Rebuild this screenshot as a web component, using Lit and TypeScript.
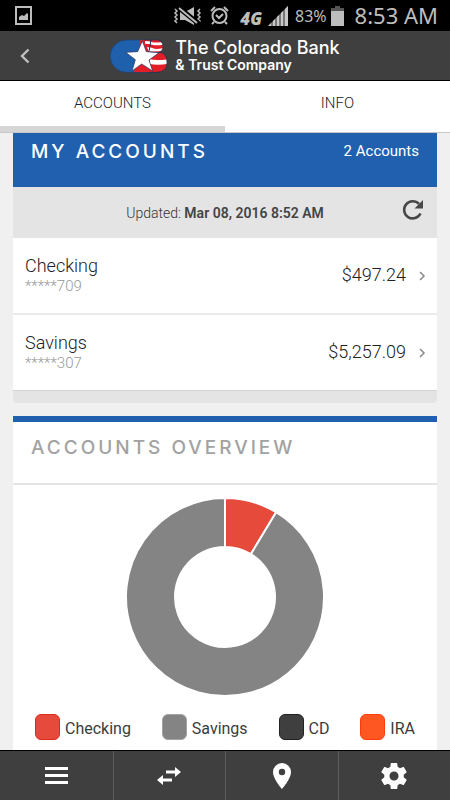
import { LitElement, html, css, svg } from "lit";
import { customElement, property, state } from "lit/decorators.js";
import { classMap } from "lit/directives/class-map.js";
import { styleMap } from "lit/directives/style-map.js";

interface Account {
  name: string;
  masked: string;
  balance: number;
  color: string;
}

const ACCOUNTS: Account[] = [
  { name: "Checking", masked: "*****709", balance: 497.24, color: "#e64a3b" },
  { name: "Savings", masked: "*****307", balance: 5257.09, color: "#848484" },
];

const LEGEND = [
  { name: "Checking", color: "#e64a3b", edge: "#e2281c" },
  { name: "Savings", color: "#848484", edge: "#a3a3a3" },
  { name: "CD", color: "#3f3f3f", edge: "#222222" },
  { name: "IRA", color: "#ff5722", edge: "#ff3c0a" },
];

const money = (n: number) =>
  "$" + n.toLocaleString("en-US", { minimumFractionDigits: 2, maximumFractionDigits: 2 });

@customElement("status-bar")
export class StatusBar extends LitElement {
  static styles = css`
    :host {
      display: flex;
      align-items: center;
      height: 31px;
      padding: 0 12px 0 15px;
      background: #000;
      color: #bdbdbd;
      font-family: "Noto Sans", "Open Sans", sans-serif;
    }
    svg { display: block; flex: none; }
    .spacer { flex: 1; }
    .vibrate { margin-right: 8px; }
    .alarm { margin-right: 11px; }
    .network {
      font: italic 800 17px/20px "Open Sans", sans-serif;
      margin: 6px 6px 0 0;
    }
    .signal { margin: 1px 7px 0 0; }
    .percent { font-size: 16px; line-height: 20px; }
    .battery { margin: 0 11px 0 4px; }
    .time { font-size: 22px; line-height: 30px; margin-top: -1px; white-space: nowrap; }
  `;
  render() {
    return html`
      <svg width="17" height="19" viewBox="0 0 17 19" aria-hidden="true">
        <rect x="1" y="1" width="15" height="17" fill="none" stroke="#bdbdbd" stroke-width="2" />
        <path d="M4 14V11l3-2 2 1 3-3 1 1v6z" fill="#bdbdbd" />
      </svg>
      <span class="spacer"></span>
      <svg class="vibrate" width="29" height="18" viewBox="0 0 29 18" aria-hidden="true">
        <path d="M2 2l2 2-2 2 2 2-2 2 2 2-2 2 2 2M27 2l-2 2 2 2-2 2 2 2-2 2 2 2-2 2" fill="none" stroke="#bdbdbd" stroke-width="1.500" />
        <path d="M7 5h5l9-5v18l-9-5H7z" fill="#bdbdbd" />
        <path d="M5 0l21 17" stroke="#000" stroke-width="5" />
        <path d="M6 1l18 15" stroke="#bdbdbd" stroke-width="2" />
      </svg>
      <svg class="alarm" width="19" height="19" viewBox="0 0 19 19" fill="none" stroke="#bdbdbd" stroke-width="2" aria-hidden="true">
        <circle cx="9.5" cy="10" r="7" />
        <path d="M1 5l4-4M18 5l-4-4M4 16l-2 2M15 16l2 2M6 9l3 3 4-4" />
      </svg>
      <span class="network">4G</span>
      <svg class="signal" width="20" height="20" viewBox="0 0 20 20" aria-hidden="true">
        <path d="M0 20L20 0V20z" fill="#777" />
        <path d="M0 20l3-3v3zM5 15l2-2v7H5zM9 11l2-2v11H9zM13 7l2-2v15h-2zM17 3l3-3v20h-3z" fill="#c8c8c8" />
      </svg>
      <span class="percent">83%</span>
      <svg class="battery" width="13" height="20" viewBox="0 0 13 20" aria-hidden="true">
        <path d="M4 0h5v2h4v3H0V2h4z" fill="#555" />
        <path d="M0 5h13v15H0z" fill="#bdbdbd" />
      </svg>
      <span class="time">8:53 AM</span>
    `;
  }
}

@customElement("bank-header")
export class BankHeader extends LitElement {
  static styles = css`
    :host {
      display: grid;
      grid-template-columns: 50px 1fr 50px;
      align-items: center;
      height: 50px;
      box-sizing: border-box;
      border-bottom: 1px solid #000;
      background: #3f3f3f;
      color: #fff;
    }
    button {
      display: grid;
      place-items: center;
      height: 48px;
      padding: 0;
      border: 0;
      background: none;
    }
    .brand {
      display: flex;
      justify-content: center;
      align-items: center;
      gap: 7px;
      font-family: Inter, sans-serif;
      white-space: nowrap;
    }
    .name {
      font-size: 18px;
      font-weight: 500;
      line-height: 18px;
    }
    .sub {
      font-size: 14px;
      font-weight: 600;
      line-height: 16px;
    }
  `;
  render() {
    return html`
      <button aria-label="Back">
        <svg width="10" height="16" viewBox="0 0 10 16" fill="none" stroke="#c0c0c0" stroke-width="2.4">
          <path d="M8.500 1.500L2 8l6.500 6.500" />
        </svg>
      </button>
      <div class="brand">
        <svg width="58" height="34" viewBox="329 116 174 102" aria-hidden="true">
          <defs>
            <clipPath id="lobes">
              <path d="M420 119H466a20 20 0 0 1 14 36q20 8 20 31 0 29-30 30H400z" />
            </clipPath>
          </defs>
          <path d="M378 119H430L450 216H378a48 48 0 0 1 0-97z" fill="#1f60ad" stroke="#24406f" stroke-width="2" />
          <g clip-path="url(#lobes)">
            <path d="M420 116h90v104H400z" fill="#e41e26" />
            <path d="M434 122q12 0 20 3t34 0v8q-20 3-32 0t-22-3zM440 141q10-1 18 3t28 0v8l-40 2zM448 177q18 4 54 0v14q-30 5-54 0z" fill="#fff" />
            <path d="M452 119l-6 34M446 155q22 5 40 0" fill="none" stroke="#1b2f5f" stroke-width="3" />
          </g>
          <path d="M430 119H466a20 20 0 0 1 14 36q20 8 20 31 0 29-30 30H446" fill="none" stroke="#1b2f5f" stroke-width="2" />
          <path d="M426 122l12 32 38 3-30 22 11 33-33-21-29 21 10-34-29-22 36-2z" fill="#fff" stroke="#1b2f5f" stroke-width="2" />
        </svg>
        <div>
          <div class="name">The Colorado Bank</div>
          <div class="sub">&amp; Trust Company</div>
        </div>
      </div>
    `;
  }
}

@customElement("tab-strip")
export class TabStrip extends LitElement {
  @state() private active = 0;
  static styles = css`
    :host {
      display: grid;
      grid-template-columns: 1fr 1fr;
      background: #fff;
      border-bottom: 1px solid #c8c8c8;
    }
    .tab {
      padding: 0;
      border: 0;
      border-bottom: 6px solid #fff;
      background: #fff;
      color: #222;
      font: 300 15px/45px Roboto, sans-serif;
    }
    .active { border-bottom-color: #d6d6d6; }
  `;
  render() {
    return ["ACCOUNTS", "INFO"].map(
      (label, i) => html`<button
        class=${classMap({ tab: true, active: i === this.active })}
        @click=${() => (this.active = i)}
      >${label}</button>`
    );
  }
}

@customElement("accounts-card")
export class AccountsCard extends LitElement {
  static styles = css`
    :host { display: block; font-family: Roboto, sans-serif; color: #222; }
    .head {
      display: flex;
      justify-content: space-between;
      height: 54px;
      padding: 0 18px;
      box-sizing: border-box;
      background: #2160ae;
      color: #fff;
      line-height: 36px;
    }
    h2 {
      margin: 0;
      font: 500 19px/38px Inter, sans-serif;
      letter-spacing: 3px;
    }
    .count { font-size: 15px; }
    .updated {
      display: grid;
      grid-template-columns: 50px 1fr 50px;
      align-items: center;
      height: 51px;
      background: #e4e4e4;
      text-align: center;
      font-size: 14px;
      font-weight: 300;
      color: #333;
    }
    .updated strong { font-weight: 600; color: #444; }
    .refresh {
      grid-column: 3;
      display: grid;
      place-items: center;
      height: 51px;
      padding: 0 0 6px;
      border: 0;
      background: none;
    }
    .date { grid-column: 2; }
    ul { margin: 0; padding: 0; list-style: none; background: #fff; }
    .row {
      display: flex;
      align-items: center;
      height: 75px;
      box-sizing: border-box;
      padding: 0 11px 2px 12px;
      color: inherit;
      text-decoration: none;
      font-size: 18px;
      font-weight: 300;
    }
    li + li { border-top: 2px solid #ebebeb; }
    .label { flex: 1; padding-top: 2px; line-height: 22px; }
    .mask { display: block; font-size: 15px; line-height: 19px; color: #999; }
    .chevron { margin: 2px 0 0 13px; }
    .foot {
      height: 13px;
      border-top: 1px solid #d4d4d4;
      border-radius: 0 0 4px 4px;
      background: #e4e4e4;
      box-sizing: border-box;
    }
  `;
  render() {
    return html`
      <div class="head">
        <h2>MY ACCOUNTS</h2>
        <span class="count">${ACCOUNTS.length} Accounts</span>
      </div>
      <div class="updated">
        <span class="date">Updated: <strong>Mar 08, 2016 8:52 AM</strong></span>
        <button class="refresh" aria-label="Refresh">
          <svg width="22" height="22" viewBox="0 0 22 22">
            <path d="M19.500 14.500A8.600 8.600 0 1 1 18 4.900" fill="none" stroke="#484848" stroke-width="2.600" />
            <path d="M22 1v8.500h-8.500z" fill="#484848" />
          </svg>
        </button>
      </div>
      <ul>
        ${ACCOUNTS.map(
          (a) => html`<li>
            <a class="row" href="#">
              <span class="label">${a.name}<span class="mask">${a.masked}</span></span>
              <span>${money(a.balance)}</span>
              <svg class="chevron" width="7" height="10" viewBox="0 0 7 10" fill="none" stroke="#888" stroke-width="1.500">
                <path d="M1 1l4 4-4 4" />
              </svg>
            </a>
          </li>`
        )}
      </ul>
      <div class="foot"></div>
    `;
  }
}

@customElement("donut-chart")
export class DonutChart extends LitElement {
  @property({ attribute: false }) slices: Account[] = [];
  static styles = css`
    :host { display: block; }
    svg { display: block; margin: 0 auto; }
  `;
  render() {
    const total = this.slices.reduce((sum, s) => sum + s.balance, 0);
    const outer = 99;
    const inner = 50;
    let turn = 0;
    const at = (r: number, t: number) =>
      `${(100 + r * Math.sin(t * 2 * Math.PI)).toFixed(2)} ${(100 - r * Math.cos(t * 2 * Math.PI)).toFixed(2)}`;
    return html`
      <svg width="200" height="200" viewBox="0 0 200 200" role="img" aria-label="Balance by account">
        ${this.slices.map((s) => {
          const from = turn;
          turn += s.balance / total;
          const big = turn - from > 0.5 ? 1 : 0;
          return svg`<path
            d="M${at(outer, from)}A${outer} ${outer} 0 ${big} 1 ${at(outer, turn)}L${at(inner, turn)}A${inner} ${inner} 0 ${big} 0 ${at(inner, from)}Z"
            fill=${s.color} stroke="#fff" stroke-width="2" />`;
        })}
      </svg>
    `;
  }
}

@customElement("overview-card")
export class OverviewCard extends LitElement {
  static styles = css`
    :host {
      display: block;
      border-top: 6px solid #2160ae;
      background: #fff;
      font-family: Roboto, sans-serif;
    }
    h2 {
      margin: 0;
      padding: 7px 18px 16px;
      border-bottom: 2px solid #e4e4e4;
      font: 500 19px/38px Inter, sans-serif;
      letter-spacing: 3px;
      color: #a2a2a2;
    }
    donut-chart { padding: 12px 0 17px; }
    .legend {
      display: flex;
      justify-content: space-between;
      margin: 0;
      padding: 0 22px 9px;
      list-style: none;
      color: #3c3c3c;
      font-size: 16px;
      font-weight: 400;
      line-height: 26px;
    }
    .legend li { display: flex; gap: 5px; }
    .text { padding-top: 2px; }
    .swatch {
      width: 25px;
      height: 26px;
      box-sizing: border-box;
      border: 1px solid;
      border-radius: 6px;
    }
  `;
  render() {
    return html`
      <h2>ACCOUNTS OVERVIEW</h2>
      <donut-chart .slices=${ACCOUNTS}></donut-chart>
      <ul class="legend">
        ${LEGEND.map(
          (l) => html`<li>
            <span class="swatch" style=${styleMap({ background: l.color, borderColor: l.edge })}></span>
            <span class="text">${l.name}</span>
          </li>`
        )}
      </ul>
    `;
  }
}

@customElement("bottom-nav")
export class BottomNav extends LitElement {
  static styles = css`
    :host {
      display: grid;
      grid-template-columns: repeat(4, 1fr);
      height: 49px;
      border-top: 1px solid #000;
      background: #3f3f3f;
    }
    button {
      display: grid;
      place-items: center;
      padding: 0;
      border: 0;
      background: none;
    }
    button + button { border-left: 1px solid #5c5c5c; }
    svg { display: block; fill: #fff; }
  `;
  render() {
    return html`
      <button aria-label="Menu">
        <svg width="24" height="17" viewBox="0 0 24 17">
          <path d="M1 0h23v3H1zM1 7h23v3H1zM1 14h23v3H1z" />
        </svg>
      </button>
      <button aria-label="Transfer">
        <svg width="24" height="18" viewBox="0 0 24 18">
          <path d="M9 3.500h9V0l6 5-6 5V6.500H9zM15 11.500H6V8l-6 5 6 5v-3.500h9z" />
        </svg>
      </button>
      <button aria-label="Locations">
        <svg width="20" height="26" viewBox="0 0 20 26">
          <path fill-rule="evenodd" d="M10 0a9 9 0 0 0-9 9c0 7 9 17 9 17s9-10 9-17a9 9 0 0 0-9-9zm0 5.800a3.200 3.200 0 1 1 0 6.400 3.200 3.200 0 0 1 0-6.400z" />
        </svg>
      </button>
      <button aria-label="Settings">
        <svg width="26" height="26" viewBox="2 2 20 20">
          <path d="M19.430 12.980c.04-.32.07-.64.07-.98s-.03-.66-.07-.98l2.110-1.650c.19-.15.24-.42.12-.64l-2-3.460c-.12-.22-.39-.3-.61-.22l-2.490 1c-.52-.4-1.080-.73-1.690-.98l-.38-2.650A.488.488 0 0 0 14 2h-4c-.25 0-.46.18-.49.42l-.38 2.650c-.61.25-1.170.59-1.690.98l-2.490-1c-.23-.09-.49 0-.61.22l-2 3.460c-.13.22-.07.49.12.64l2.110 1.650c-.04.32-.07.65-.07.98s.03.66.07.98l-2.110 1.650c-.19.15-.24.42-.12.64l2 3.460c.12.22.39.3.61.22l2.490-1c.52.4 1.080.73 1.690.98l.38 2.650c.03.24.24.42.49.42h4c.25 0 .46-.18.49-.42l.38-2.650c.61-.25 1.170-.59 1.690-.98l2.490 1c.23.09.49 0 .61-.22l2-3.460c.12-.22.07-.49-.12-.64l-2.110-1.650zM12 15.500c-1.930 0-3.500-1.570-3.500-3.500s1.570-3.500 3.500-3.500 3.500 1.570 3.500 3.500-1.570 3.500-3.500 3.500z" />
        </svg>
      </button>
    `;
  }
}

@customElement("app-root")
export class AppRoot extends LitElement {
  static styles = css`
    :host {
      display: flex;
      flex-direction: column;
      height: 100vh;
      background: #f0f0f0;
    }
    status-bar, bank-header, tab-strip, bottom-nav { flex: none; }
    main {
      flex: 1;
      min-height: 0;
      overflow-y: auto;
      scrollbar-width: none;
      display: flex;
      flex-direction: column;
      gap: 13px;
      padding: 0 13px;
    }
    overview-card { flex: none; }
  `;
  render() {
    return html`
      <status-bar></status-bar>
      <bank-header></bank-header>
      <tab-strip></tab-strip>
      <main>
        <accounts-card></accounts-card>
        <overview-card></overview-card>
      </main>
      <bottom-nav></bottom-nav>
    `;
  }
}
